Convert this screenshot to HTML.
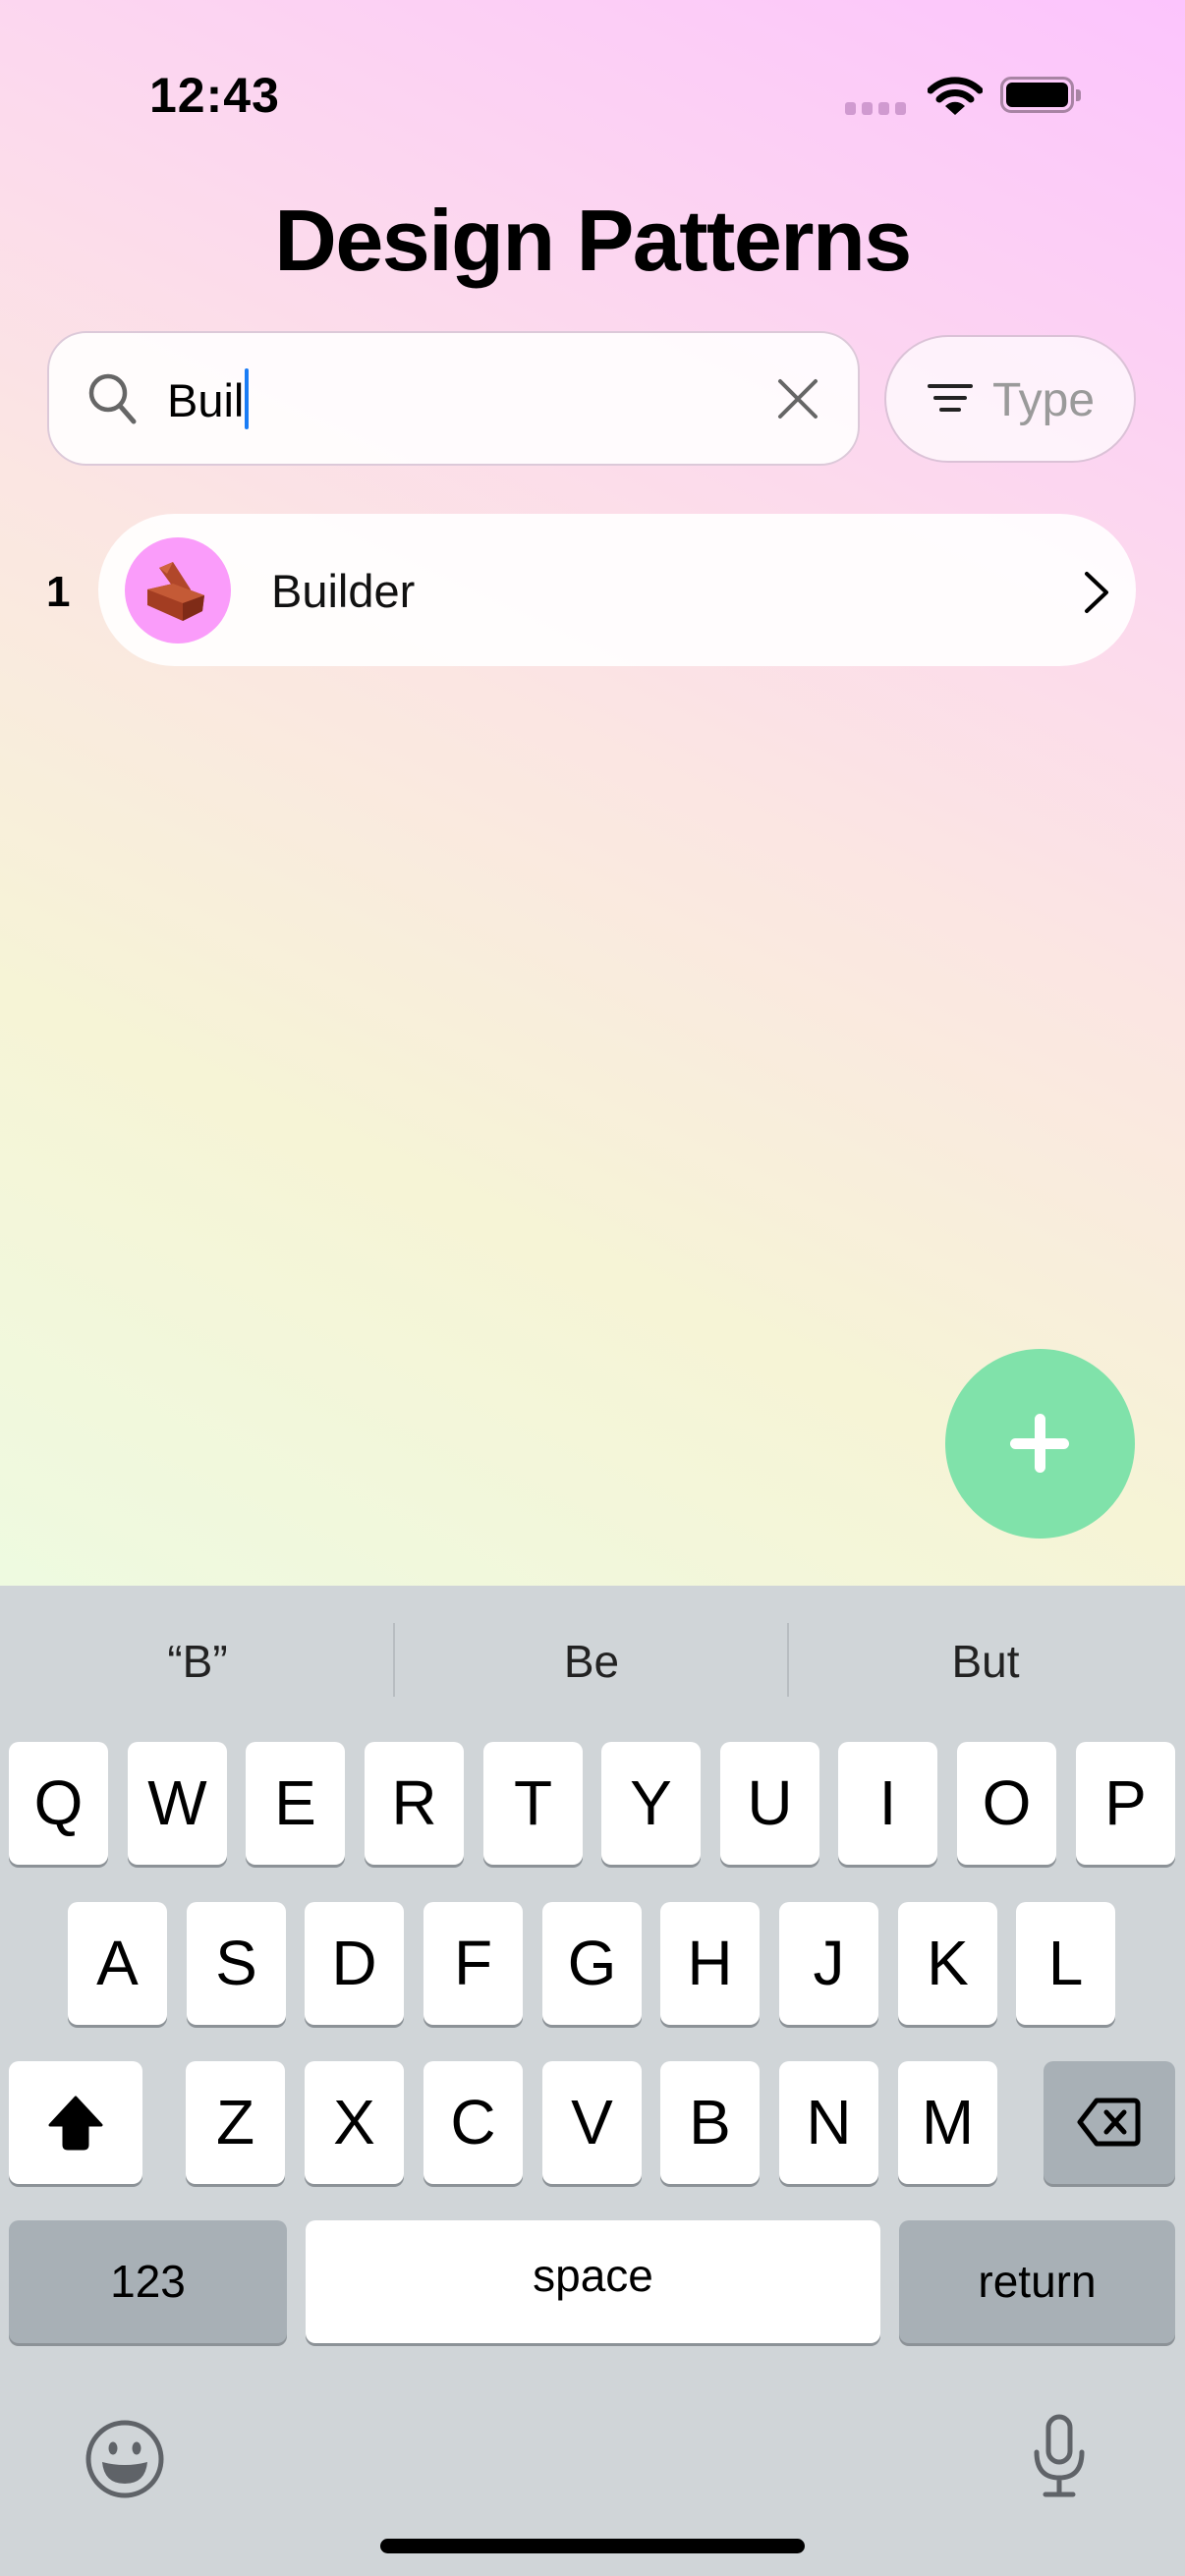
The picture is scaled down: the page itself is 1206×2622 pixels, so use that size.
<!DOCTYPE html>
<html><head><meta charset="utf-8"><style>
*{margin:0;padding:0;box-sizing:border-box}
body{width:1206px;height:2622px;overflow:hidden;position:relative;font-family:"Liberation Sans",sans-serif;background:#d0d5d8}
.bg{position:absolute;left:0;top:0;width:1206px;height:1614px;background:linear-gradient(205deg,#fcc4fd 0%,#fcd6f0 25%,#fbe6e2 48%,#f6f4d6 72%,#eefae0 100%)}
.abs{position:absolute}
.time{left:152px;top:68px;font-size:50px;font-weight:bold;letter-spacing:1px;color:#000}
.title{left:0;width:1206px;top:194px;text-align:center;font-size:88px;font-weight:bold;letter-spacing:-1.5px;color:#000}
.search{left:48px;top:337px;width:827px;height:137px;border-radius:40px;background:rgba(255,255,255,0.88);border:2px solid #dcc9d9}
.type{left:900px;top:341px;width:256px;height:130px;border-radius:65px;background:rgba(255,255,255,0.7);border:2px solid #dbc2d7}
.card{left:100px;top:523px;width:1056px;height:155px;border-radius:78px;background:rgba(255,255,255,0.9)}
.kb{left:0;top:1614px;width:1206px;height:1008px;background:#d0d5d8}
.key{position:absolute;width:101px;height:125px;background:#fff;border-radius:10px;box-shadow:0 3px 0 #8c9297;text-align:center;font-size:64px;line-height:125px;color:#000}
.dk{background:#a8b0b6}
.sug{position:absolute;top:1664px;font-size:46px;color:#222;text-align:center;width:400px}
</style></head><body>
<div class="bg"></div>
<div class="abs time">12:43</div>
<svg class="abs" style="left:860px;top:100px" width="64" height="20"><g fill="#d09ad0"><rect x="0" y="4" width="11" height="13" rx="3"/><rect x="17" y="4" width="11" height="13" rx="3"/><rect x="34" y="4" width="11" height="13" rx="3"/><rect x="51" y="4" width="11" height="13" rx="3"/></g></svg>
<svg class="abs" style="left:944px;top:78px" width="56" height="40" viewBox="0 0 56 40"><path d="M3 14 A36 36 0 0 1 53 14" stroke="#000" stroke-width="7" fill="none" stroke-linecap="round"/><path d="M12 23 A23 23 0 0 1 44 23" stroke="#000" stroke-width="7" fill="none" stroke-linecap="round"/><path d="M18 30 L28 39 L38 30 A14 14 0 0 0 18 30Z" fill="#000"/></svg>
<div class="abs" style="left:1018px;top:78px;width:75px;height:37px;border:3px solid #a884a4;border-radius:11px"></div>
<div class="abs" style="left:1024px;top:84px;width:63px;height:25px;background:#000;border-radius:6px"></div>
<div class="abs" style="left:1095px;top:91px;width:5px;height:12px;background:#a884a4;border-radius:0 3px 3px 0"></div>

<div class="abs title">Design Patterns</div>

<div class="abs search"></div>
<svg class="abs" style="left:88px;top:378px" width="54" height="56" viewBox="0 0 54 56"><circle cx="22" cy="22" r="17" stroke="#666" stroke-width="4.5" fill="none"/><path d="M34 35 L48 51" stroke="#666" stroke-width="5" stroke-linecap="round"/></svg>
<div class="abs" style="left:170px;top:380px;font-size:47px;color:#000">Buil</div>
<div class="abs" style="left:249px;top:375px;width:4px;height:62px;background:#1a7cf5;border-radius:2px"></div>
<svg class="abs" style="left:790px;top:384px" width="44" height="44"><path d="M4 4L40 40M40 4L4 40" stroke="#666" stroke-width="4" stroke-linecap="round"/></svg>

<div class="abs type"></div>
<svg class="abs" style="left:944px;top:390px" width="46" height="32"><g stroke="#222" stroke-width="4" stroke-linecap="round"><path d="M2 3H44M8 15H38M14 27H32"/></g></svg>
<div class="abs" style="left:1010px;top:380px;font-size:48px;color:#9a9a9a">Type</div>

<div class="abs" style="left:47px;top:578px;font-size:44px;font-weight:bold">1</div>
<div class="abs card"></div>
<div class="abs" style="left:127px;top:547px;width:108px;height:108px;border-radius:50%;background:#fa9cfa"></div>
<svg class="abs" style="left:148px;top:570px" width="64" height="64" viewBox="0 0 64 64">
<path d="M14 8 L28 2 L46 30 L40 44 Z" fill="#b1472a"/><path d="M14 8 L28 2 L22 14 Z" fill="#d0643f"/>
<path d="M2 30 L28 24 L60 36 L58 52 L38 62 L2 46 Z" fill="#a33d22"/><path d="M2 30 L28 24 L60 36 L38 44 Z" fill="#c45a36"/><path d="M38 44 L60 36 L58 52 L38 62Z" fill="#7f2b17"/>
</svg>
<div class="abs" style="left:276px;top:574px;font-size:47px;color:#111">Builder</div>
<svg class="abs" style="left:1100px;top:580px" width="32" height="46"><path d="M6 4L26 23L6 42" stroke="#000" stroke-width="4" fill="none" stroke-linecap="round" stroke-linejoin="round"/></svg>

<div class="abs" style="left:962px;top:1373px;width:193px;height:193px;border-radius:50%;background:#80e2aa"></div>
<div class="abs" style="left:1028px;top:1464px;width:60px;height:11px;border-radius:6px;background:#fff"></div>
<div class="abs" style="left:1053px;top:1439px;width:11px;height:60px;border-radius:6px;background:#fff"></div>

<div class="abs kb"></div>
<div class="sug" style="left:1px">“B”</div>
<div class="sug" style="left:402px">Be</div>
<div class="sug" style="left:803px">But</div>
<div class="abs" style="left:400px;top:1652px;width:2px;height:75px;background:#b8bdc1"></div>
<div class="abs" style="left:801px;top:1652px;width:2px;height:75px;background:#b8bdc1"></div>

<div class="key" style="left:9px;top:1773px">Q</div>
<div class="key" style="left:130px;top:1773px">W</div>
<div class="key" style="left:250px;top:1773px">E</div>
<div class="key" style="left:371px;top:1773px">R</div>
<div class="key" style="left:492px;top:1773px">T</div>
<div class="key" style="left:612px;top:1773px">Y</div>
<div class="key" style="left:733px;top:1773px">U</div>
<div class="key" style="left:853px;top:1773px">I</div>
<div class="key" style="left:974px;top:1773px">O</div>
<div class="key" style="left:1095px;top:1773px">P</div>

<div class="key" style="left:69px;top:1936px">A</div>
<div class="key" style="left:190px;top:1936px">S</div>
<div class="key" style="left:310px;top:1936px">D</div>
<div class="key" style="left:431px;top:1936px">F</div>
<div class="key" style="left:552px;top:1936px">G</div>
<div class="key" style="left:672px;top:1936px">H</div>
<div class="key" style="left:793px;top:1936px">J</div>
<div class="key" style="left:914px;top:1936px">K</div>
<div class="key" style="left:1034px;top:1936px">L</div>

<div class="key" style="left:9px;top:2098px;width:136px"><svg width="60" height="60" viewBox="0 0 60 60" style="margin-top:33px"><path d="M30 4 L56 32 L42 32 L42 52 Q42 56 38 56 L22 56 Q18 56 18 52 L18 32 L4 32 Z" fill="#000" stroke="#000" stroke-width="3" stroke-linejoin="round"/></svg></div>
<div class="key" style="left:189px;top:2098px">Z</div>
<div class="key" style="left:310px;top:2098px">X</div>
<div class="key" style="left:431px;top:2098px">C</div>
<div class="key" style="left:552px;top:2098px">V</div>
<div class="key" style="left:672px;top:2098px">B</div>
<div class="key" style="left:793px;top:2098px">N</div>
<div class="key" style="left:914px;top:2098px">M</div>
<div class="key dk" style="left:1062px;top:2098px;width:134px"><svg width="66" height="52" viewBox="0 0 66 52" style="margin-top:36px"><path d="M20 4 H58 Q62 4 62 8 V44 Q62 48 58 48 H20 L3 26 Z" fill="none" stroke="#000" stroke-width="5" stroke-linejoin="round"/><path d="M30 16 L48 36 M48 16 L30 36" stroke="#000" stroke-width="5" stroke-linecap="round"/></svg></div>

<div class="key dk" style="left:9px;top:2260px;width:283px;font-size:46px">123</div>
<div class="key" style="left:311px;top:2260px;width:585px;font-size:46px;line-height:112px">space</div>
<div class="key dk" style="left:915px;top:2260px;width:281px;font-size:46px">return</div>

<svg class="abs" style="left:86px;top:2462px" width="82" height="82" viewBox="0 0 82 82"><circle cx="41" cy="41" r="37" fill="none" stroke="#5f6368" stroke-width="5"/><ellipse cx="29" cy="30" rx="4.5" ry="6.5" fill="#5f6368"/><ellipse cx="53" cy="30" rx="4.5" ry="6.5" fill="#5f6368"/><path d="M18 44 Q41 50 64 44 Q62 66 41 66 Q20 66 18 44Z" fill="#5f6368"/></svg>
<svg class="abs" style="left:1048px;top:2456px" width="60" height="88" viewBox="0 0 60 88"><rect x="19" y="4" width="22" height="46" rx="11" fill="none" stroke="#5f6368" stroke-width="5"/><path d="M7 40 Q7 66 30 66 Q53 66 53 40 M30 66 V82 M16 83 H44" fill="none" stroke="#5f6368" stroke-width="5" stroke-linecap="round"/></svg>

<div class="abs" style="left:387px;top:2584px;width:432px;height:15px;border-radius:8px;background:#000"></div>
</body></html>
